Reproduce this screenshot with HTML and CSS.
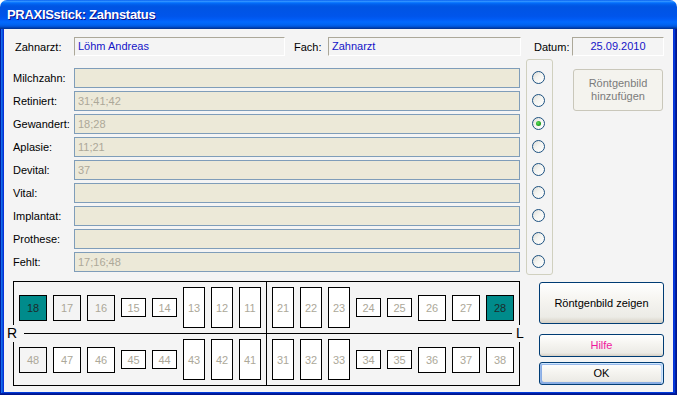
FILE: index.html
```html
<!DOCTYPE html>
<html lang="de">
<head>
<meta charset="utf-8">
<title>PRAXISstick: Zahnstatus</title>
<link rel="stylesheet" href="styles.css">
</head>
<body>
<div class="window">
  <div class="titlebar"><span class="title">PRAXISstick: Zahnstatus</span></div>
  <div class="frame">
    <div class="client">
      <div class="header">
        <span class="hlbl l-arzt">Zahnarzt:</span>
        <div class="hfield w-arzt">Löhm Andreas</div>
        <span class="hlbl l-fach">Fach:</span>
        <div class="hfield w-fach">Zahnarzt</div>
        <span class="hlbl l-datum">Datum:</span>
        <div class="hfield w-datum">25.09.2010</div>
      </div>

      <div class="middle">
        <div class="rows">
          <div class="row"><span class="rlbl">Milchzahn:</span><div class="field"></div></div>
          <div class="row"><span class="rlbl">Retiniert:</span><div class="field">31;41;42</div></div>
          <div class="row"><span class="rlbl">Gewandert:</span><div class="field">18;28</div></div>
          <div class="row"><span class="rlbl">Aplasie:</span><div class="field">11;21</div></div>
          <div class="row"><span class="rlbl">Devital:</span><div class="field">37</div></div>
          <div class="row"><span class="rlbl">Vital:</span><div class="field"></div></div>
          <div class="row"><span class="rlbl">Implantat:</span><div class="field"></div></div>
          <div class="row"><span class="rlbl">Prothese:</span><div class="field"></div></div>
          <div class="row"><span class="rlbl">Fehlt:</span><div class="field">17;16;48</div></div>
        </div>
        <div class="radiogroup">
          <span class="radio"></span>
          <span class="radio"></span>
          <span class="radio checked"></span>
          <span class="radio"></span>
          <span class="radio"></span>
          <span class="radio"></span>
          <span class="radio"></span>
          <span class="radio"></span>
          <span class="radio"></span>
        </div>
        <div class="sidecol">
          <button class="btn btn-disabled btn-add">Röntgenbild<br>hinzufügen</button>
        </div>
      </div>

      <div class="bottom">
        <div class="teeth">
          <div class="half half-left">
            <div class="jaw">
              <span class="tooth molar sel">18</span>
              <span class="tooth molar missing">17</span>
              <span class="tooth molar missing">16</span>
              <span class="tooth premolar">15</span>
              <span class="tooth premolar">14</span>
              <span class="tooth front">13</span>
              <span class="tooth front">12</span>
              <span class="tooth front">11</span>
            </div>
            <div class="jaw jaw-lower">
              <span class="tooth molar missing">48</span>
              <span class="tooth molar">47</span>
              <span class="tooth molar">46</span>
              <span class="tooth premolar">45</span>
              <span class="tooth premolar">44</span>
              <span class="tooth front">43</span>
              <span class="tooth front">42</span>
              <span class="tooth front">41</span>
            </div>
          </div>
          <div class="half">
            <div class="jaw">
              <span class="tooth front">21</span>
              <span class="tooth front">22</span>
              <span class="tooth front">23</span>
              <span class="tooth premolar">24</span>
              <span class="tooth premolar">25</span>
              <span class="tooth molar">26</span>
              <span class="tooth molar">27</span>
              <span class="tooth molar sel">28</span>
            </div>
            <div class="jaw jaw-lower">
              <span class="tooth front">31</span>
              <span class="tooth front">32</span>
              <span class="tooth front">33</span>
              <span class="tooth premolar">34</span>
              <span class="tooth premolar">35</span>
              <span class="tooth molar">36</span>
              <span class="tooth molar">37</span>
              <span class="tooth molar">38</span>
            </div>
          </div>
          <span class="side side-r">R</span>
          <span class="side side-l">L</span>
        </div>
        <div class="btncol">
          <button class="btn btn-show">Röntgenbild zeigen</button>
          <button class="btn btn-help">Hilfe</button>
          <button class="btn btn-ok">OK</button>
        </div>
      </div>
    </div>
  </div>
</div>
</body>
</html>
```

FILE: styles.css
```css
* { box-sizing: border-box; }

html, body {
  margin: 0;
  padding: 0;
  background: #ffffff;
}

body {
  width: 677px;
  height: 395px;
  overflow: hidden;
  font-family: "Liberation Sans", Arial, sans-serif;
  font-size: 11px;
  color: #000;
}

.window {
  width: 677px;
  height: 395px;
  display: flex;
  flex-direction: column;
}

.titlebar {
  height: 29px;
  flex: 0 0 29px;
  border-radius: 7px 7px 0 0;
  background: linear-gradient(180deg,
    #0058ee 0%, #3593ff 4%, #288eff 6%, #127dff 8%, #036ffc 10%,
    #0262ee 14%, #0057e5 20%, #0054e3 24%, #0055eb 56%, #005bf5 66%,
    #026afe 76%, #0062ef 86%, #0052d6 92%, #0040ab 96%, #003092 100%);
  padding-left: 7px;
}

.title {
  display: block;
  line-height: 30px;
  font-family: "Liberation Sans", Arial, sans-serif;
  font-weight: bold;
  font-size: 13px;
  letter-spacing: -0.3px;
  color: #ffffff;
  text-shadow: 1px 1px #0f1089;
}

.frame {
  flex: 1 1 auto;
  background: #0831d9;
  padding: 0 4px 3px 4px;
  box-shadow:
    inset -1px -1px #00138c,
    inset 1px 0 #001ea0,
    inset -2px -2px #001ea0,
    inset 2px 0 #166aee,
    inset -3px -3px #003bda,
    inset 3px 0 #0855dd;
}

.client {
  width: 669px;
  height: 363px;
  background: #f4f4f4;
  padding-top: 8px;
}

/* header row */
.header {
  display: flex;
  align-items: center;
  height: 19px;
  padding-left: 11px;
}

.hlbl { display: block; }
.l-arzt { width: 59px; }
.l-fach { width: 34px; margin-left: 9px; }
.l-datum { width: 38px; margin-left: 13px; }

.hfield {
  height: 19px;
  line-height: 17px;
  padding-left: 3px;
  color: #1414c8;
  background: #f4f4f4;
  border: 1px solid;
  border-color: #aca899 #ffffff #ffffff #aca899;
  white-space: nowrap;
}
.w-arzt { width: 211px; }
.w-fach { width: 193px; }
.w-datum { width: 92px; text-align: center; padding-left: 0; }

/* middle */
.middle {
  display: flex;
  align-items: flex-start;
  margin-top: 3px;
  height: 216px;
}

.rows {
  display: flex;
  flex-direction: column;
  gap: 3px;
  padding-top: 9px;
  padding-left: 9px;
}

.row {
  display: flex;
  align-items: center;
  height: 20px;
}

.rlbl {
  display: block;
  width: 61px;
}

.field {
  width: 446px;
  height: 20px;
  line-height: 18px;
  padding-left: 3px;
  border: 1px solid #7f9db9;
  background: #ece9d8;
  color: #aca899;
}

.radiogroup {
  margin-left: 6px;
  width: 27px;
  height: 216px;
  border: 1px solid #d0d0bf;
  border-radius: 3px;
  padding: 11px 0 6px 5px;
  display: flex;
  flex-direction: column;
  gap: 10px;
}

.radio {
  position: relative;
  display: block;
  width: 13px;
  height: 13px;
  border-radius: 50%;
  border: 1px solid #1c5180;
  background: linear-gradient(135deg, #dcdcd7 0%, #f4f4f0 45%, #ffffff 100%);
}

.radio.checked::after {
  content: "";
  position: absolute;
  left: 3px;
  top: 3px;
  width: 5px;
  height: 5px;
  border-radius: 50%;
  background: radial-gradient(circle at 40% 40%, #5ee05e 0%, #21a121 60%, #158515 100%);
}

.sidecol {
  margin-left: 20px;
  padding-top: 10px;
}

/* buttons */
.btn {
  display: block;
  font-family: "Liberation Sans", Arial, sans-serif;
  font-size: 11px;
  color: #000;
  border: 1px solid #003c74;
  border-radius: 3px;
  background: linear-gradient(180deg, #ffffff 0%, #f6f5f1 40%, #ecebe6 85%, #d6d0c5 100%);
  padding: 0;
  margin: 0;
  text-align: center;
  line-height: 13px;
}

.btn-disabled {
  border-color: #c9c7ba;
  background: #f4f3ee;
  color: #7b7b7b;
}

.btn-add {
  width: 90px;
  height: 42px;
}

/* bottom */
.bottom {
  display: flex;
  align-items: flex-start;
  margin-top: 6px;
}

.teeth {
  position: relative;
  margin-left: 9px;
  width: 507px;
  height: 105px;
  border: 1px solid #000;
  display: flex;
}

.half {
  width: 252px;
  display: flex;
  flex-direction: column;
}

.half-left {
  width: 253px;
  border-right: 1px solid #000;
}

.jaw {
  height: 51px;
  display: flex;
  align-items: center;
  gap: 6px;
  padding: 0 5px;
}

.jaw-lower {
  height: 52px;
  border-top: 1px solid #000;
}

.tooth {
  display: flex;
  align-items: center;
  justify-content: center;
  border: 1px solid #000;
  background: #ffffff;
  color: #aca899;
  font-size: 11px;
}

.molar { width: 28px; height: 26px; }
.premolar { width: 25px; height: 19px; }
.front { width: 22px; height: 41px; }

.tooth.missing { background: #f4f4f4; }
.tooth.sel { background: #008b8b; color: #1c2c2c; }

.side {
  position: absolute;
  top: 43px;
  height: 17px;
  line-height: 17px;
  font-size: 14px;
  background: #f4f4f4;
  color: #000;
}

.side-r {
  left: -8px;
  width: 18px;
  padding-left: 1px;
}

.side-l {
  left: 498px;
  width: 17px;
  padding-left: 4px;
}

.btncol {
  margin-left: 19px;
  margin-top: 1px;
  display: flex;
  flex-direction: column;
  width: 125px;
}

.btn-show {
  width: 125px;
  height: 42px;
}

.btn-help {
  width: 125px;
  height: 23px;
  margin-top: 10px;
  color: #f0179e;
}

.btn-ok {
  width: 125px;
  height: 23px;
  margin-top: 5px;
  box-shadow:
    inset -1px 1px #cee7ff,
    inset 1px 2px #98b8ea,
    inset -2px 2px #bcd4f6,
    inset 1px -1px #89ade4,
    inset 2px -2px #89ade4;
}
```
